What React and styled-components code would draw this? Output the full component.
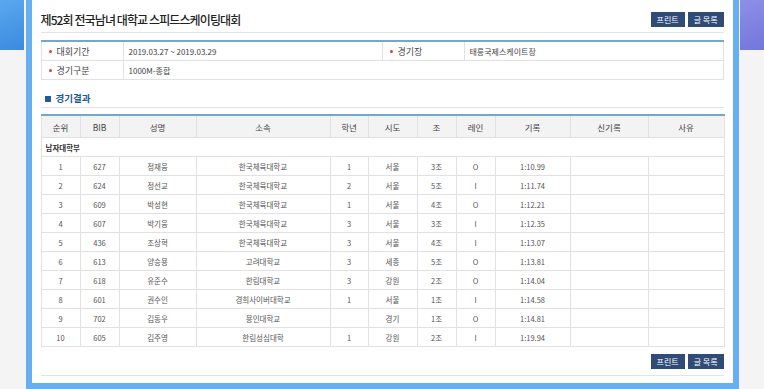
import React from "react"
import styled, { createGlobalStyle } from "styled-components"

const rows = [
  ["1", "627", "정재웅", "한국체육대학교", "1", "서울", "3조", "O", "1:10.99"],
  ["2", "624", "정선교", "한국체육대학교", "2", "서울", "5조", "I", "1:11.74"],
  ["3", "609", "박성현", "한국체육대학교", "1", "서울", "4조", "O", "1:12.21"],
  ["4", "607", "박기웅", "한국체육대학교", "3", "서울", "3조", "I", "1:12.35"],
  ["5", "436", "조상혁", "한국체육대학교", "3", "서울", "4조", "I", "1:13.07"],
  ["6", "613", "양승용", "고려대학교", "3", "세종", "5조", "O", "1:13.81"],
  ["7", "618", "유준수", "한림대학교", "3", "강원", "2조", "O", "1:14.04"],
  ["8", "601", "권수인", "경희사이버대학교", "1", "서울", "1조", "I", "1:14.58"],
  ["9", "702", "김동우", "용인대학교", "", "경기", "1조", "O", "1:14.81"],
  ["10", "605", "김주영", "한림성심대학", "1", "강원", "2조", "I", "1:19.94"],
]

const columns = [
  ["순위", 39],
  ["BIB", 39],
  ["성명", 77],
  ["소속", 134],
  ["학년", 38],
  ["시도", 49],
  ["조", 39],
  ["레인", 39],
  ["기록", 75],
  ["신기록", 78],
  ["사유", 76],
]

const Buttons = () => (
  <ButtonGroup>
    <Btn>프린트</Btn>
    <Btn>글 목록</Btn>
  </ButtonGroup>
)

const App = () => {
  return (
    <>
      <GlobalStyle />
      <Page>
        <Side>
          <Deco side="left" />
        </Side>

        <Modal>
          <Inner>
            {/* 제목 */}
            <Header>
              <Title>제52회 전국남녀 대학교 스피드스케이팅대회</Title>
              <Buttons />
            </Header>

            {/* 대회 정보 */}
            <InfoTable>
              <tbody>
                <tr>
                  <InfoLabel>대회기간</InfoLabel>
                  <InfoValue>2019.03.27 ~ 2019.03.29</InfoValue>
                  <InfoLabel>경기장</InfoLabel>
                  <InfoValue>태릉국제스케이트장</InfoValue>
                </tr>
                <tr>
                  <InfoLabel>경기구분</InfoLabel>
                  <InfoValue colSpan={3}>1000M-종합</InfoValue>
                </tr>
              </tbody>
            </InfoTable>

            <SectionTitle>경기결과</SectionTitle>

            {/* 결과 테이블 */}
            <ResultTable>
              <colgroup>
                {columns.map(([name, w]) => (
                  <col key={name} style={{ width: w }} />
                ))}
              </colgroup>
              <thead>
                <tr>
                  {columns.map(([name]) => (
                    <Th key={name}>{name}</Th>
                  ))}
                </tr>
              </thead>
              <tbody>
                <tr>
                  <GroupCell colSpan={11}>남자대학부</GroupCell>
                </tr>
                {rows.map((r) => (
                  <tr key={r[0]}>
                    {r.map((v, i) => (
                      <Td key={i}>{v}</Td>
                    ))}
                    <Td />
                    <Td />
                  </tr>
                ))}
              </tbody>
            </ResultTable>

            <Footer>
              <Buttons />
            </Footer>
          </Inner>
        </Modal>

        <Side>
          <Deco side="right" />
        </Side>
      </Page>
    </>
  )
}

export default App

const GlobalStyle = createGlobalStyle`
  html, body {
    margin: 0;
    padding: 0;
    background: #f4f4f4;
    overflow: hidden;
  }
  body {
    font-family: "Noto Sans CJK KR", "Noto Sans", sans-serif;
    color: #444;
  }
`

const Page = styled.div`
  display: flex;
  width: 764px;
  height: 389px;
  overflow: hidden;
`

const Side = styled.div`
  flex: 1;
  background: #f4f4f4;
`

const Deco = styled.div`
  width: 24px;
  height: 50px;
  margin-left: ${(props) => (props.side === "right" ? "1px" : "0")};
  background: ${(props) =>
    props.side === "right"
      ? "linear-gradient(160deg, #8d8fe6 0%, #7376dc 100%)"
      : "linear-gradient(160deg, #5aa8ee 0%, #3a8ae0 100%)"};
`

const Modal = styled.div`
  width: 713px;
  flex: none;
  height: 389px;
  box-sizing: border-box;
  background: #fff;
  border: 6px solid #66b0f2;
  border-top: none;
`

const Inner = styled.div`
  padding: 0 9px 7px;
`

const Header = styled.div`
  display: flex;
  align-items: center;
  justify-content: space-between;
  height: 26px;
  padding-top: 6px;
  border-bottom: 1px solid #e3e3e3;
`

const Title = styled.h1`
  margin: 0;
  font-size: 12px;
  font-weight: 500;
  color: #222;
  letter-spacing: -0.9px;
`

const ButtonGroup = styled.div`
  display: flex;
  gap: 3px;
`

const Btn = styled.button`
  height: 15px;
  padding: 0 6px;
  border: none;
  background: #2f4b78;
  color: #fff;
  font-family: inherit;
  font-size: 8px;
  line-height: 15px;
  cursor: pointer;
`

const InfoTable = styled.table`
  width: 100%;
  margin-top: 7px;
  border-collapse: collapse;
  border-top: 2px solid #6ea8d8;
  table-layout: fixed;

  td {
    border: 1px solid #e1e1e1;
    height: 18px;
    padding: 0;
  }
`

const InfoLabel = styled.td`
  width: 66px;
  padding-left: 15px !important;
  position: relative;
  font-size: 9px;
  color: #444;

  &::before {
    content: "";
    position: absolute;
    left: 7px;
    top: 8px;
    width: 3px;
    height: 3px;
    border-radius: 50%;
    background: #d9403a;
  }
`

const InfoValue = styled.td`
  padding-left: 5px !important;
  font-size: 8px;
  color: #444;
`

const SectionTitle = styled.h2`
  margin: 10px 0 0;
  height: 17px;
  line-height: 16px;
  font-size: 9.5px;
  font-weight: 700;
  color: #1e5aa0;
  border-bottom: 1px solid #e3e3e3;
  padding-left: 4px;

  &::before {
    content: "";
    display: inline-block;
    width: 6px;
    height: 6px;
    background: #1e5aa0;
    margin-right: 5px;
    vertical-align: 0;
  }
`

const ResultTable = styled.table`
  width: 100%;
  margin-top: 6px;
  border-collapse: collapse;
  border-top: 2px solid #6ea8d8;
  table-layout: fixed;
`

const Th = styled.th`
  height: 21px;
  padding: 0;
  background: #f3f3f3;
  border: 1px solid #e1e1e1;
  border-top: none;
  font-size: 8.5px;
  font-weight: 400;
  color: #444;
`

const Td = styled.td`
  height: 18px;
  padding: 0;
  border: 1px solid #e1e1e1;
  text-align: center;
  font-size: 7.5px;
  color: #555;
`

const GroupCell = styled.td`
  height: 18px;
  padding: 0 0 0 4px;
  border: 1px solid #e1e1e1;
  font-size: 7.5px;
  font-weight: 700;
  color: #333;
`

const Footer = styled.div`
  display: flex;
  justify-content: flex-end;
  margin-top: 7px;
  padding-bottom: 6px;
  border-bottom: 1px solid #e3e3e3;
`
